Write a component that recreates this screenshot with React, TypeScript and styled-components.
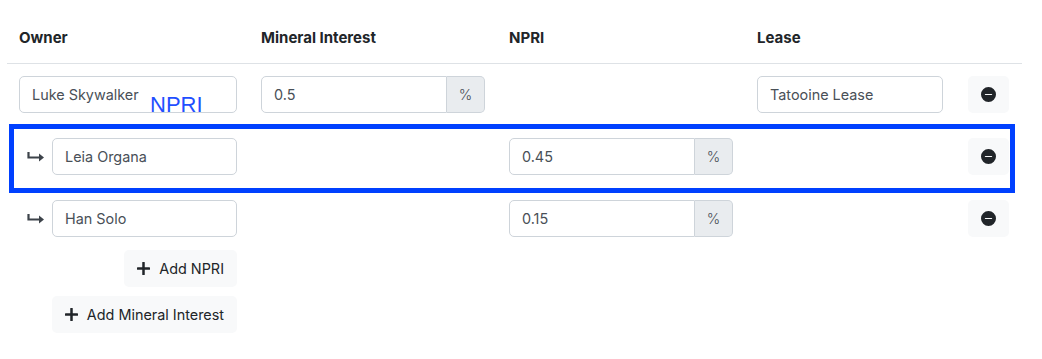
import styled, { createGlobalStyle } from "styled-components";

const GlobalStyle = createGlobalStyle`
  body {
    margin: 0;
    background: #fff;
    font-family: Inter, "Noto Sans", sans-serif;
    color: #212529;
  }
`;

interface Owner {
  name: string;
  mineral?: string;
  npri?: string;
  lease?: string;
  child?: boolean;
  highlight?: boolean;
}

const rows: Owner[] = [
  { name: "Luke Skywalker", mineral: "0.5", lease: "Tatooine Lease" },
  { name: "Leia Organa", npri: "0.45", child: true, highlight: true },
  { name: "Han Solo", npri: "0.15", child: true },
];

const ReturnArrow = () => (
  <svg width="18" height="12" viewBox="0 0 18 12">
    <path d="M1.5 1v5.5h11" stroke="#3d434a" strokeWidth="2.2" fill="none" />
    <path d="M12 2.5l5 4-5 4z" fill="#3d434a" />
  </svg>
);

const DashCircle = () => (
  <svg width="15" height="15" viewBox="0 0 16 16">
    <path
      fill="#212529"
      d="M16 8A8 8 0 1 1 0 8a8 8 0 0 1 16 0M4.5 7.5a.5.5 0 0 0 0 1h7a.5.5 0 0 0 0-1z"
    />
  </svg>
);

const Plus = () => (
  <svg width="13" height="13" viewBox="0 0 13 13">
    <rect x="5.25" y="0" width="2.5" height="13" rx="0.6" fill="#212529" />
    <rect x="0" y="5.25" width="13" height="2.5" rx="0.6" fill="#212529" />
  </svg>
);

const Percent = ({ value }: { value: string }) => (
  <S.Group>
    <S.GroupInput defaultValue={value} />
    <S.Addon>%</S.Addon>
  </S.Group>
);

const App = () => {
  return (
    <>
      <GlobalStyle />
      <S.Page>
        <S.HeaderRow>
          <S.Th>Owner</S.Th>
          <S.Th>Mineral Interest</S.Th>
          <S.Th>NPRI</S.Th>
          <S.Th>Lease</S.Th>
          <S.Th />
        </S.HeaderRow>

        {rows.map((r) => (
          <S.Row key={r.name}>
            {r.highlight && (
              <>
                <S.Highlight />
                <S.HighlightLabel>NPRI</S.HighlightLabel>
              </>
            )}
            <S.Cell>
              {r.child && (
                <S.Indent>
                  <ReturnArrow />
                </S.Indent>
              )}
              <S.Input defaultValue={r.name} />
            </S.Cell>
            <S.Cell>{r.mineral && <Percent value={r.mineral} />}</S.Cell>
            <S.Cell>{r.npri && <Percent value={r.npri} />}</S.Cell>
            <S.Cell>{r.lease && <S.Input defaultValue={r.lease} />}</S.Cell>
            <S.Cell>
              <S.RemoveButton>
                <DashCircle />
              </S.RemoveButton>
            </S.Cell>
          </S.Row>
        ))}

        <S.ActionRow>
          <S.ActionCell>
            <S.LightButton>
              <Plus />
              Add NPRI
            </S.LightButton>
          </S.ActionCell>
        </S.ActionRow>
        <S.ActionRow>
          <S.ActionCell>
            <S.LightButton>
              <Plus />
              Add Mineral Interest
            </S.LightButton>
          </S.ActionCell>
        </S.ActionRow>
      </S.Page>
    </>
  );
};

export default App;

const columns = "242px 248px 248px 210px 67px";

const S = {
  Page: styled.div`
    width: 1015px;
    padding: 14px 0 0 7px;
  `,
  HeaderRow: styled.div`
    display: grid;
    grid-template-columns: ${columns};
    border-bottom: 1px solid #dee2e6;
  `,
  Th: styled.div`
    padding: 12px 12px 13px;
    font-size: 15px;
    line-height: 24px;
    font-weight: 700;
    color: #212529;
  `,
  Row: styled.div`
    position: relative;
    display: grid;
    grid-template-columns: ${columns};
    padding: 12px 0 13px;
  `,
  Highlight: styled.div`
    position: absolute;
    left: 2px;
    right: 7px;
    top: -2px;
    bottom: -5px;
    border: 5px solid #0040ff;
    pointer-events: none;
  `,
  HighlightLabel: styled.span`
    position: absolute;
    left: 143px;
    top: -34px;
    font-family: "Liberation Sans", Arial, sans-serif;
    font-size: 22px;
    line-height: 26px;
    color: #1f4fff;
    z-index: 1;
  `,
  Cell: styled.div`
    display: flex;
    align-items: center;
    padding: 0 12px;
  `,
  Indent: styled.div`
    width: 33px;
    flex: none;
    display: flex;
    justify-content: center;
    padding-top: 1px;
  `,
  Input: styled.input`
    flex: 1;
    min-width: 0;
    height: 37px;
    box-sizing: border-box;
    padding: 6px 12px;
    font-family: inherit;
    font-size: 14.4px;
    color: #495057;
    background: #fff;
    border: 1px solid #ced4da;
    border-radius: 5px;
    outline: none;
  `,
  Group: styled.div`
    display: flex;
    width: 100%;
    height: 37px;
  `,
  GroupInput: styled.input`
    flex: 1;
    min-width: 0;
    box-sizing: border-box;
    padding: 6px 12px;
    font-family: inherit;
    font-size: 14.4px;
    color: #495057;
    border: 1px solid #ced4da;
    border-radius: 5px 0 0 5px;
    outline: none;
  `,
  Addon: styled.span`
    width: 38px;
    box-sizing: border-box;
    display: flex;
    align-items: center;
    justify-content: center;
    font-size: 14.4px;
    font-weight: 300;
    color: #495057;
    background: #e9ecef;
    border: 1px solid #ced4da;
    border-left: none;
    border-radius: 0 5px 5px 0;
  `,
  RemoveButton: styled.button`
    width: 41px;
    height: 37px;
    margin-left: 1px;
    padding: 0;
    display: flex;
    align-items: center;
    justify-content: center;
    background: #f8f9fa;
    border: none;
    border-radius: 5px;
  `,
  ActionRow: styled.div`
    display: grid;
    grid-template-columns: ${columns};
    padding-bottom: 9px;
  `,
  ActionCell: styled.div`
    display: flex;
    justify-content: flex-end;
    padding: 0 12px;
  `,
  LightButton: styled.button`
    height: 37px;
    display: flex;
    align-items: center;
    gap: 9px;
    padding: 0 13px 0 13px;
    font-family: inherit;
    font-size: 14.4px;
    color: #212529;
    background: #f8f9fa;
    border: none;
    border-radius: 5px;
  `,
};
